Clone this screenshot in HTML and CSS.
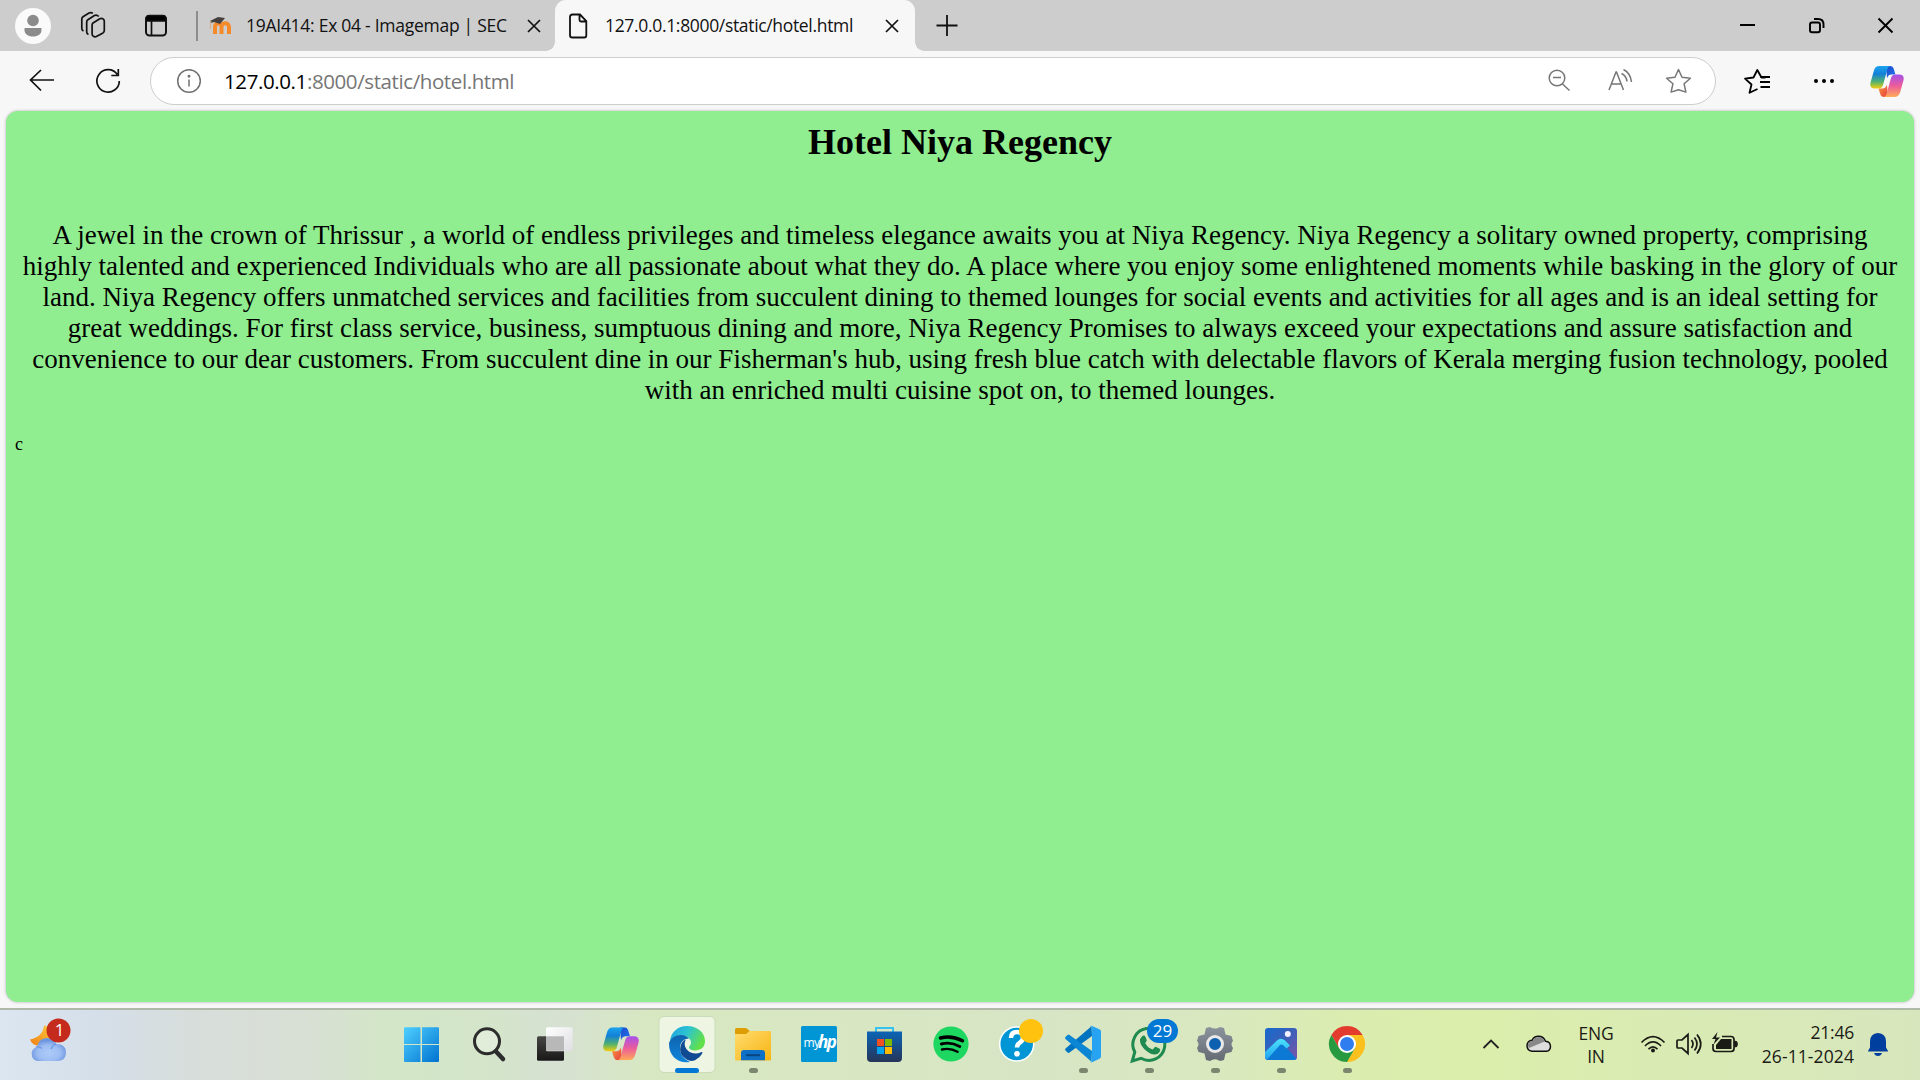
FILE: index.html
```html
<!DOCTYPE html>
<html lang="en">
<head>
<meta charset="utf-8">
<title>127.0.0.1:8000/static/hotel.html</title>
<link rel="stylesheet" href="styles.css">
</head>
<body>
<svg class="defs" width="0" height="0">
  <defs>
    <linearGradient id="cpA" x1="0" y1="0" x2="0" y2="1"><stop offset="0" stop-color="#1ba4ee"/><stop offset=".35" stop-color="#1280d8"/><stop offset=".7" stop-color="#52b16e"/><stop offset="1" stop-color="#f5cf0a"/></linearGradient>
    <linearGradient id="cpB" x1="0" y1="0" x2="0" y2="1"><stop offset="0" stop-color="#a550ea"/><stop offset=".5" stop-color="#ec5c9b"/><stop offset="1" stop-color="#ffab55"/></linearGradient>
    <linearGradient id="cpC" x1="0" y1="0" x2="1" y2="1"><stop offset="0" stop-color="#1b48c8"/><stop offset="1" stop-color="#2377ef"/></linearGradient>
    <linearGradient id="cpD" x1="0" y1="0" x2="1" y2="1"><stop offset="0" stop-color="#f99a3c"/><stop offset="1" stop-color="#e53b3f"/></linearGradient>
    <symbol id="copilot" viewBox="0 0 36 33">
      <path fill="url(#cpC)" d="M17 0h4c2.500 0 3.500 1 4.300 3.500L27 9h-4c-3 0-4 1.500-5 4z"/>
      <path fill="url(#cpD)" d="M19 33h-4c-2.500 0-3.500-1-4.300-3.500L9 24h4c3 0 4-1.500 5-4z"/>
      <path fill="url(#cpA)" d="M10 0h12c-2 0-3 1.500-3.700 4l-4.500 16c-.8 2.700-2 4-5 4H5c-4 0-5.500-2.500-4.500-6.500L4 5C5 1.500 7 0 10 0z"/>
      <path fill="url(#cpB)" d="M26 33H14c2 0 3-1.500 3.700-4l4.500-16c.8-2.700 2-4 5-4H31c4 0 5.500 2.500 4.500 6.500L32 28c-1 3.500-3 5-6 5z"/>
    </symbol>
    <linearGradient id="win" x1="0" y1="0" x2="1" y2="1"><stop offset="0" stop-color="#4fd0ff"/><stop offset="1" stop-color="#0072d0"/></linearGradient>
    <linearGradient id="dark" x1="0" y1="0" x2="0" y2="1"><stop offset="0" stop-color="#484644"/><stop offset="1" stop-color="#181818"/></linearGradient>
    <linearGradient id="light" x1="0" y1="0" x2="1" y2="1"><stop offset="0" stop-color="#fff"/><stop offset="1" stop-color="#dedee2"/></linearGradient>
    <linearGradient id="edgeTop" x1="0" y1="0" x2="1" y2=".4"><stop offset="0" stop-color="#1d9fe0"/><stop offset=".5" stop-color="#2cc3d2"/><stop offset="1" stop-color="#62e04c"/></linearGradient>
    <linearGradient id="edgeLeft" x1="0" y1="0" x2="0" y2="1"><stop offset="0" stop-color="#0f62ae"/><stop offset="1" stop-color="#0f86dc"/></linearGradient>
    <linearGradient id="folder" x1="0" y1="0" x2="1" y2="1"><stop offset="0" stop-color="#ffdc6e"/><stop offset="1" stop-color="#f8b413"/></linearGradient>
    <linearGradient id="store" x1="0" y1="0" x2="0" y2="1"><stop offset="0" stop-color="#0c64b5"/><stop offset="1" stop-color="#253558"/></linearGradient>
    <linearGradient id="photo" x1="0" y1="0" x2="1" y2="1"><stop offset="0" stop-color="#1669cc"/><stop offset=".5" stop-color="#3e60b9"/><stop offset="1" stop-color="#7d54a8"/></linearGradient>
    <linearGradient id="peak" x1="0" y1="0" x2="0" y2="1"><stop offset="0" stop-color="#4be2fb"/><stop offset="1" stop-color="#22a4ee"/></linearGradient>
    <linearGradient id="gear" x1="0" y1="0" x2="0" y2="1"><stop offset="0" stop-color="#8a939c"/><stop offset="1" stop-color="#656b73"/></linearGradient>
    <radialGradient id="cloud" cx=".5" cy=".65" r=".55"><stop offset="0" stop-color="#aecbf8"/><stop offset=".6" stop-color="#9dbdf3"/><stop offset="1" stop-color="#6d96e0"/></radialGradient>
    <linearGradient id="moon" x1="0" y1="1" x2="1" y2="0"><stop offset="0" stop-color="#f07f16"/><stop offset="1" stop-color="#fbce3c"/></linearGradient>
  </defs>
</svg>

<header class="tabstrip">
  <svg class="strip-tools" width="204" height="51" viewBox="0 0 204 51" fill="none" stroke="#111" stroke-width="1.700">
    <circle cx="33" cy="26" r="18" fill="#fafafa" stroke="none"/>
    <circle cx="33" cy="20.500" r="5.800" fill="#8b8b8b" stroke="none"/>
    <path d="M24.500 28h17v2c0 4-3.500 6.500-8.500 6.500s-8.500-2.500-8.500-6.500z" fill="#8b8b8b" stroke="none"/>
    <path d="M93 23l6.800-4.200q1.500-1 3 0 1.500.8 1.500 2.400v9.300q0 1.600-1.300 2.400L96.400 36.400q-1.500.8-3-.1-1.300-.8-1.300-2.300V25q0-1.300.9-2z"/>
    <path d="M88.500 34.500q-1.800-.8-1.800-2.500V22q0-1.500 1.200-2.300l6.500-4.200q2.300-1.300 4.300 1"/>
    <path d="M83.500 31q-1.700-.8-1.700-2.500V19q0-1.500 1.200-2.300L89 13q2-1 3.800.3"/>
    <rect x="146" y="16" width="20" height="19.500" rx="3.500" stroke-width="2"/>
    <path d="M146 21v-2q0-3.500 3.500-3.500h13q3.500 0 3.500 3.500v2z" fill="#000"/>
    <path d="M151.500 20v15"/>
    <path d="M197 11v30" stroke="#777" stroke-width="1.500"/>
  </svg>
  <div class="tab tab-back">
    <svg class="favicon" width="26" height="20" viewBox="0 0 26 20">
      <path d="M7 18v-7c0-5 6.500-5 6.500 0v7m0-7c0-5 7.500-5 7.500 0v7" fill="none" stroke="#f58a2b" stroke-width="4"/>
      <path d="M2 5l8-4 7 1-5 6-6-2-3 1z" fill="#43403f"/><path d="M3 5l-1 8" stroke="#d8a983"/>
    </svg>
    <span class="tab-title title-one">19AI414: Ex 04 - Imagemap | SEC</span>
    <svg class="close" width="14" height="14" viewBox="0 0 14 14"><path d="M1 1l12 12M13 1L1 13"/></svg>
  </div>
  <div class="tab tab-active">
    <svg class="file" width="20" height="26" viewBox="0 0 20 26"><path d="M4.500 1.500H12l6.300 6.500v14.500q0 2-2 2h-12q-2.300 0-2.300-2V4q0-2.500 2.500-2.500zM11.500 1.500V7q0 1.500 1.500 1.500h5.500"/></svg>
    <span class="tab-title title-two">127.0.0.1:8000/static/hotel.html</span>
    <svg class="close" width="14" height="14" viewBox="0 0 14 14"><path d="M1 1l12 12M13 1L1 13"/></svg>
  </div>
  <svg class="newtab" width="22" height="22" viewBox="0 0 22 22"><path d="M11 0v21M.500 10.500h21"/></svg>
  <svg class="window-buttons" width="180" height="51" viewBox="0 0 180 51">
    <path d="M0 25h15M138.500 18.500l14 14M152.500 18.500l-14 14"/>
    <rect x="70" y="22.500" width="10" height="9.700" rx="2"/>
    <path d="M74 19h4q5.500 0 5.500 5.500v3.500"/>
  </svg>
</header>

<nav class="toolbar">
  <svg class="nav-buttons" width="150" height="60" viewBox="0 0 150 60">
    <path d="M54 29H31M41 19L30.500 29 41 39.500"/>
    <path d="M117.300 23.500A11.200 11.200 0 1 0 119.300 30M118.300 18v6.500h-7"/>
  </svg>
  <div class="omnibox">
    <svg class="info" width="26" height="26" viewBox="0 0 26 26"><circle cx="13" cy="13" r="11.300"/><path d="M13 11.500v7"/><circle cx="13" cy="8.300" r=".7"/></svg>
    <span class="url"><b>127.0.0.1</b>:8000/static/hotel.html</span>
    <svg class="omni-actions" width="146" height="44" viewBox="0 0 146 44">
      <circle cx="9" cy="19" r="7.800"/><path d="M5 18.500h8M14.500 25l7 6.500"/>
      <path d="M61 31l7-18h.5l7 18M63.500 25h9.500M75.500 10.500q7 3.500 8 12.500M73.500 14.500q5 2.500 5.500 8"/>
      <path d="M130.500 10.500l3.500 7.700 8.400 1-6.300 5.600 1.800 8.300-7.400-2.400-7.400 2.400 1.800-8.300-6.300-5.600 8.400-1z" stroke-linejoin="round"/>
    </svg>
  </div>
  <svg class="right-tools" width="100" height="60" viewBox="0 0 100 60">
    <path d="M23.500 26.500h-4L15.300 19 11.500 26.500l-8.500 1.200 6.500 5.800-2 8.300 8-3.800"/>
    <path d="M18.500 26h9.500M18 31h10M18.500 36h9.500"/>
    <g class="dots"><circle cx="74" cy="30" r="2"/><circle cx="82" cy="30" r="2"/><circle cx="90" cy="30" r="2"/></g>
  </svg>
  <svg class="copilot-button" width="34" height="31"><use href="#copilot"/></svg>
</nav>

<main class="viewport">
  <h1>Hotel Niya Regency</h1>
  <p>A jewel in the crown of Thrissur , a world of endless privileges and timeless elegance awaits you at Niya Regency. Niya Regency a solitary owned property, comprising highly talented and experienced Individuals who are all passionate about what they do. A place where you enjoy some enlightened moments while basking in the glory of our land. Niya Regency offers unmatched services and facilities from succulent dining to themed lounges for social events and activities for all ages and is an ideal setting for great weddings. For first class service, business, sumptuous dining and more, Niya Regency Promises to always exceed your expectations and assure satisfaction and convenience to our dear customers. From succulent dine in our Fisherman's hub, using fresh blue catch with delectable flavors of Kerala merging fusion technology, pooled with an enriched multi cuisine spot on, to themed lounges.</p>
  <div class="stray">c</div>
</main>

<footer class="taskbar">
  <svg class="weather" width="80" height="70" viewBox="0 0 80 70">
    <path d="M44 15.500q-1 11-14 14 2 6 9 6 12-1 14-14-4-5-9-6z" fill="url(#moon)"/>
    <path d="M37.500 51a7.200 7.200 0 0 1-.5-14q1.500-8.500 10-9 7 0 9.500 6 9.500 0 9.500 8.500 0 8-8 8.500z" fill="url(#cloud)"/>
    <path d="M51 39q1-3.500 5-5M36 37q4-.5 6 1.500" fill="none" stroke="#6d96e0" stroke-width="1.300"/>
    <circle cx="58.500" cy="20.500" r="12" fill="#c42b1c"/>
    <text x="59.500" y="26" class="badge-text">1</text>
  </svg>
  <div class="apps">
    <svg viewBox="0 0 66 70"><path fill="url(#win)" d="M17 17.300h15.500V34H16V18.300q0-1 1-1zM34 17.300h16q1 0 1 1V34H34zM16 35h16.500v17H17q-1 0-1-1zM34 35h17v16q0 1-1 1H34z"/></svg>
    <svg viewBox="0 0 66 70" fill="none" stroke="#2c2c2c"><circle cx="33" cy="31.300" r="12.500" stroke-width="3" fill="#e8f1e2" fill-opacity=".6"/><path d="M42 41.500l7 7.500" stroke-width="4.500" stroke-linecap="round"/></svg>
    <svg viewBox="0 0 66 70"><rect x="17" y="26.300" width="27" height="24.500" rx="1.500" fill="url(#dark)"/><rect x="26" y="17.300" width="26.700" height="24" rx="1.500" fill="url(#light)"/><path d="M26 26.300h18v14.500H26z" fill="#b8b8b8"/></svg>
    <svg viewBox="0 0 66 70"><use href="#copilot" x="17" y="17.300" width="36" height="33"/></svg>
    <svg viewBox="0 0 66 70">
      <rect x="7" y="6.500" width="56" height="56" rx="5" fill="#eef6e3" stroke="#cbdcba"/>
      <path d="M18 31C19 22 26 16 35 16c11 0 18 7 18 15 0 6-4 9.500-10 9.500-4 0-6-1.500-6-3 0-1.500 2-2 2-5 0-3-3-7-9-7-5 0-9 2-12 5.500z" fill="url(#edgeTop)"/>
      <path d="M17 34c0-4 5-9 12-9 4 0 7 2 8 4-5-1-9 4-9 9 0 7 4 11 10 14-12 2-21-6-21-18z" fill="url(#edgeLeft)"/>
      <path d="M34 29.500c-6 2-8 12-3 17 5 5 10 5.500 13 3 3-1.500 6-5 6.500-7 0-.8-.6-.7-1.500-.3-4 2-10 1.500-13-1.500-4-4-4-8-2-11.200z" fill="#0f4a93"/>
      <rect x="23" y="58" width="24" height="5" rx="2.500" fill="#0078d4"/>
    </svg>
    <svg viewBox="0 0 66 70"><path d="M17 24v-4.500q0-1.500 1.500-1.500H28l4 3-4 4z" fill="#dd9d05"/><path d="M17 24h11l3.500-3H52q1 0 1 1v27.500q0 1-1 1H18q-1 0-1-1z" fill="url(#folder)"/><path d="M23 50.300V43q0-3 3-3h18q3 0 3 3v7.300z" fill="#0d6fc5"/><path d="M28 45.200h14" stroke="#0a4581" stroke-width="2"/><rect class="run" x="31" y="58" width="9" height="5" rx="2.500"/></svg>
    <svg viewBox="0 0 66 70"><rect x="17" y="16" width="36" height="36" rx="1.500" fill="#0096d6"/><text x="19.500" y="37" class="my">my</text><text x="34" y="37.500" class="hp">hp</text></svg>
    <svg viewBox="0 0 66 70"><path d="M26 23v-5h17v5" fill="none" stroke="#37c2f1" stroke-width="2"/><path d="M17 21.500h35V48q0 4-4 4H21q-4 0-4-4z" fill="url(#store)"/><path d="M27 29h7v7h-7z" fill="#f25022"/><path d="M35 29h7v7h-7z" fill="#7fba00"/><path d="M27 37h7v7h-7z" fill="#00a4ef"/><path d="M35 37h7v7h-7z" fill="#ffb900"/></svg>
    <svg viewBox="0 0 66 70"><circle cx="35" cy="34" r="17.600" fill="#1ed760"/><g fill="none" stroke="#000" stroke-linecap="round"><path d="M24.500 28q11-3 22 2.800" stroke-width="3.500"/><path d="M25.300 34q9.500-2.500 18.500 2.500" stroke-width="2.900"/><path d="M26 39.500q8-2 15.500 2.300" stroke-width="2.400"/></g></svg>
    <svg viewBox="0 0 66 70"><circle cx="34.700" cy="34" r="17" fill="#0096d6" stroke="#fff" stroke-width="1.500"/><path d="M29 28q0-6 6-6t6 5.500q0 3-3 5-3 2-3 5" fill="none" stroke="#fff" stroke-width="4.500"/><circle cx="35" cy="43.800" r="2.800" fill="#fff"/><circle cx="49" cy="21" r="12" fill="#ffc20e"/></svg>
    <svg viewBox="0 0 66 70"><path d="M43.500 16.200L17.500 38.500q-1 1 0 2l2 2q1 .8 2 0L44 26z" fill="#0074c1"/><path d="M43.500 51.800L17.500 29q-1-1 0-2l2-2q1-.8 2 0L44 41z" fill="#0a86d5"/><path d="M42 16q1-.5 2 0l7.500 3.300q1.500.7 1.500 2.200v25q0 1.500-1.500 2.200L44 52.200q-1 .4-2-.4 2 .5 2-2V18.500q0-2.500-2-2.500z" fill="#27a3f2"/><rect class="run" x="31" y="58" width="9" height="5" rx="2.500"/></svg>
    <svg viewBox="0 0 66 70"><path d="M18.300 51l2.500-9a16 16 0 1 1 6.200 6.300z" fill="none" stroke="#1f8a50" stroke-width="3"/><path d="M28 26.500q2-2 3.500.5l1.200 3q.4 1-1.500 3 2.500 5 7.500 6.500l2-2.300q.8-.7 2 0l3 1.500q1 .7.300 2.200-1.500 3.500-5.500 3.500-3.500 0-8-3.500-6-5-6.500-10-.1-2.500 2-4.400z" fill="#1f8a50"/><rect x="33" y="9" width="31" height="24" rx="12" fill="#0078d4"/><text x="48.500" y="26.500" class="badge-text">29</text><rect class="run" x="31" y="58" width="9" height="5" rx="2.500"/></svg>
    <svg viewBox="0 0 66 70"><path d="M30 17q5 3 10 0l4 1 1.500 6.500 6 1.500L53 31q-3 3 0 7l-1.500 4-6 1.500L44 50l-4 1q-5-3.500-10 0l-4-1-1.500-6.500-6-1.500L17 38q3-4 0-7l1.500-5 6-1.500L26 18z" fill="url(#gear)"/><circle cx="35" cy="34" r="7.500" fill="#0d60b0" stroke="#e8e8e8" stroke-width="3"/><rect class="run" x="31" y="58" width="9" height="5" rx="2.500"/></svg>
    <svg viewBox="0 0 66 70"><rect x="19" y="18" width="32" height="32" rx="3" fill="url(#photo)"/><path d="M20 49L35 32l15.500 16.500q-1 1.500-3 1.500H22q-1.500 0-2-1z" fill="#0c79d5"/><path d="M19 42l12-11.500q4-3.500 8 0l5 5-3.500 3-3-3q-2-2-4 0L21 49.500q-2-.5-2-2.500z" fill="url(#peak)"/><circle cx="41.800" cy="24" r="3" fill="#f5f0ff"/><rect class="run" x="31" y="58" width="9" height="5" rx="2.500"/></svg>
    <svg viewBox="0 0 66 70"><path d="M19.400 25A18 18 0 0 1 50.600 25H35L27.200 38.500z" fill="#e33b2e"/><path d="M50.600 25A18 18 0 0 1 35 52l7.800-13.500L35 25z" fill="#fcc01e"/><path d="M35 52A18 18 0 0 1 19.400 25l7.800 13.500 15.600 0z" fill="#27993f"/><circle cx="35" cy="34" r="9" fill="#fff"/><circle cx="35" cy="34" r="7" fill="#2f7def"/><rect class="run" x="31" y="58" width="9" height="5" rx="2.500"/></svg>
  </div>
  <svg class="tray-left" width="90" height="70" viewBox="0 0 90 70">
    <path d="M3.500 38l7.500-7.500 7.500 7.500" fill="none" stroke="#222" stroke-width="1.800"/>
    <path d="M52 41.300q-5-.5-5-6 .5-4.500 5-5 2-4 6.500-4 5 0 7 5 5 .3 5 5.500-.5 4-4 4.500z" fill="#dedede" stroke="#111" stroke-width="1.500"/>
    <path d="M48 34q1-3 4.500-3 2-4 6-4t6.200 4.500L49 38q-1.500-2-1-4z" fill="#888"/>
  </svg>
  <div class="lang"><span>ENG</span><span>IN</span></div>
  <svg class="tray-status" width="100" height="70" viewBox="0 0 100 70" fill="none" stroke="#1b1b16" stroke-width="1.700">
    <path d="M1.500 32.500q11.500-11.500 23 0M5 36q8-8 16 0M8.500 39.200q4.500-4.500 9 0"/><circle cx="13" cy="40.500" r="2" fill="#1b1b16" stroke="none"/>
    <path d="M38 30h4l6-5.500v19L42 38h-4q-1 0-1-1v-6q0-1 1-1zM51.500 30q3 4 0 8M54.500 27.500q5 6.500 0 13M57 24.500q7.500 9.500 0 19"/>
    <path d="M82 26.500h9q3 0 3 3v9q0 3-3 3H76q-3 0-3-3V34" /><path d="M81 29h10.500v10H76v-4z" fill="#1b1b16" stroke="none"/><path d="M95 31.500q2 0 2 2.500t-2 2.500z" fill="#1b1b16"/><path d="M77.500 22l-5.500 7h3.500l-2 5.500 6.500-7h-4z" fill="#1b1b16" stroke="none"/>
  </svg>
  <div class="clock"><span>21:46</span><span class="date">26-11-2024</span></div>
  <svg class="bell" width="20" height="24" viewBox="0 0 20 24"><path d="M10 0q8 .5 8 8.500v6l2 3.500v.500H0V18l2-3.500v-6Q2 .5 10 0zM6 20h8q-1 3-4 3t-4-3z" fill="#003f9e"/></svg>
</footer>
</body>
</html>
```
FILE: styles.css
```css
* { box-sizing: border-box; }
body {
  margin: 0;
  width: 1920px;
  height: 1080px;
  overflow: hidden;
  display: flex;
  flex-direction: column;
  background: #f7f7f7;
  font-family: "Open Sans", "Noto Sans", sans-serif;
}
svg { display: block; flex: none; }
.defs { position: absolute; }

/* Tab strip */
.tabstrip { display: flex; align-items: center; height: 51px; flex: none; background: #cdcdcd; }
.tab { display: flex; align-items: center; height: 51px; white-space: nowrap; }
.tab-back { width: 351px; padding-left: 4px; }
.tab-active { width: 360px; padding-left: 13px; background: #f7f7f7; border-radius: 11px 11px 0 0; position: relative; }
.tab-active::before, .tab-active::after {
  content: "";
  position: absolute;
  bottom: 0;
  width: 9px;
  height: 9px;
}
.tab-active::before { left: -9px; background: radial-gradient(circle at 0 0, #cdcdcd 8.500px, #f7f7f7 9px); }
.tab-active::after { right: -9px; background: radial-gradient(circle at 100% 0, #cdcdcd 8.500px, #f7f7f7 9px); }
.tab-title { color: #111; font-size: 17.500px; line-height: 24px; padding-bottom: 1px; flex: none; }
.title-one { width: 281px; margin-left: 12px; letter-spacing: -.27px; }
.title-two { width: 280px; margin-left: 17px; letter-spacing: -.33px; }
.close path { stroke: #111; stroke-width: 1.700; }
.file path { fill: none; stroke: #111; stroke-width: 1.800; }
.newtab { margin-left: 21px; }
.newtab path { stroke: #111; stroke-width: 1.800; }
.window-buttons { margin-left: auto; fill: none; stroke: #000; stroke-width: 1.900; }

/* Address bar row */
.toolbar { display: flex; height: 60px; flex: none; align-items: center; }
.nav-buttons { fill: none; stroke: #111; stroke-width: 1.700; }
.omnibox {
  display: flex;
  align-items: center;
  width: 1566px;
  height: 48px;
  padding-left: 25px;
  border: 1px solid #cdcdcd;
  border-radius: 24px;
  background: #fff;
}
.info { fill: none; stroke: #707070; stroke-width: 1.500; }
.url { margin-left: 22px; color: #767676; font-size: 20.500px; line-height: 28px; white-space: nowrap; letter-spacing: -.4px; }
.url b { font-weight: 400; color: #000; }
.omni-actions { margin-left: auto; margin-right: 21px; fill: none; stroke: #767676; stroke-width: 1.500; }
.right-tools { margin-left: 26px; fill: none; stroke: #000; stroke-width: 1.800; stroke-linejoin: round; }
.dots { fill: #000; stroke: none; }
.copilot-button { margin-left: 28px; }

/* Rendered page */
.viewport {
  flex: none;
  width: 1908px;
  height: 891px;
  margin: 0 6px 6px;
  padding: 10px 9px;
  border-radius: 12px;
  background: #90ee90;
  box-shadow: 0 0 3px rgba(0, 0, 0, .3);
  font-family: "Liberation Serif", "Times New Roman", serif;
  font-size: 18px;
  color: #000;
}
.viewport h1 { margin: 0; font-size: 36px; line-height: 42px; text-align: center; }
.viewport p { margin: 57px 0 28px; font-size: 27px; line-height: 31px; text-align: center; }
.stray { font-size: 18px; line-height: 20px; }

/* Taskbar */
.taskbar {
  display: flex;
  align-items: center;
  height: 72px;
  flex: none;
  border-top: 2px solid #b0b8a8;
  background: linear-gradient(90deg, #dbe6f1 0, #d5dfea 5%, #d7ddda 10%, #d8dfd4 16%, #d3e6c7 20%, #d4e5c9 25%, #d6e1d2 29%, #d7e8c1 34%, #d8e7c2 45%, #d7e5c5 54%, #d9e8bf 63%, #dbedae 71%, #dceeab 77%, #d9ebb3 87%, #d8e6bd 100%);
}
.apps { display: flex; margin-left: 308px; }
.apps svg { width: 66px; height: 70px; }
.run { fill: #7c866f; }
.badge-text { font-size: 17px; fill: #fff; text-anchor: middle; }
.my { font-size: 12px; fill: #fff; letter-spacing: -.5px; }
.hp { font-size: 17px; font-weight: 700; font-style: italic; fill: #fff; letter-spacing: -1.500px; }
.tray-left { margin-left: 102px; }
.lang { display: flex; flex-direction: column; align-items: center; width: 52px; line-height: 23px; }
.lang, .clock { color: #1b1b16; font-size: 17.500px; letter-spacing: -.2px; }
.tray-status { margin-left: 18px; }
.clock { display: flex; flex-direction: column; align-items: flex-end; width: 114px; line-height: 24px; padding-bottom: 2px; }
.date { letter-spacing: .1px; }
.bell { margin-left: 14px; }
```
